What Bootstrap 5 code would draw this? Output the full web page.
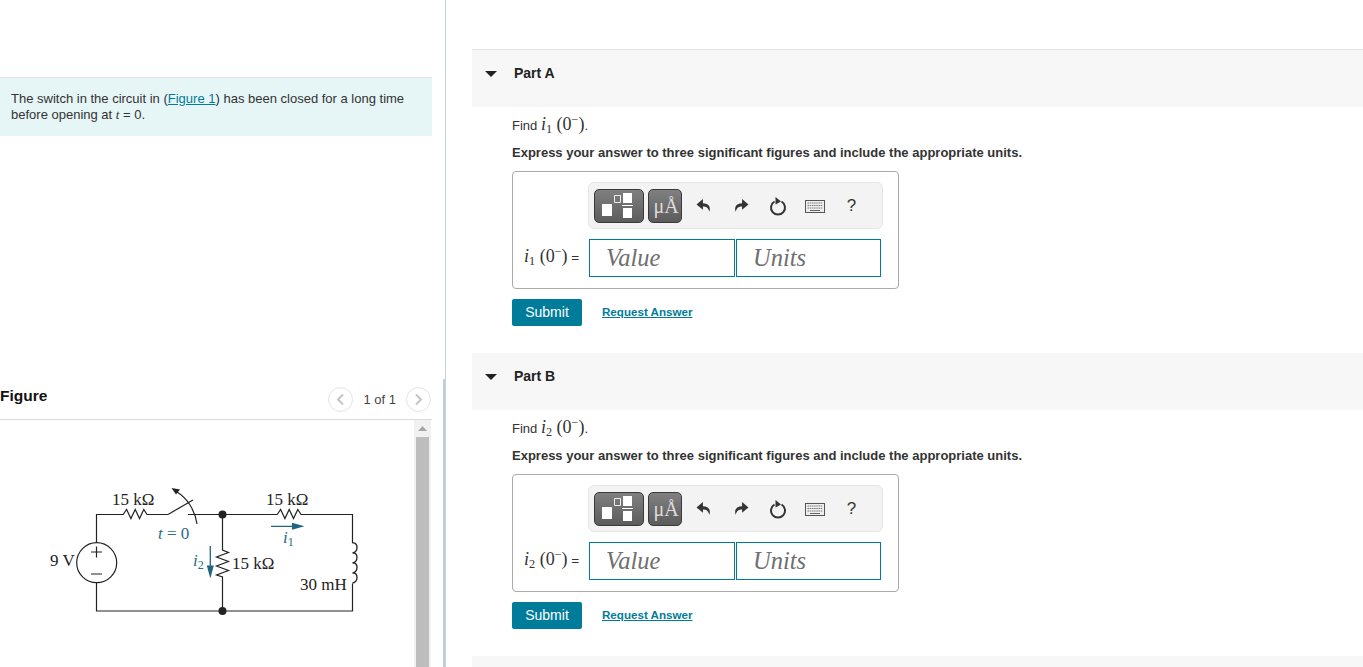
<!DOCTYPE html>
<html lang="en">
<head>
<meta charset="utf-8">
<title>Circuit problem</title>
<link href="https://cdn.jsdelivr.net/npm/bootstrap@5.3.0/dist/css/bootstrap.min.css" rel="stylesheet">
<style>
html,body{height:667px;overflow:hidden;background:#fff}
body{font-family:"Liberation Sans",Arial,sans-serif;font-size:12px;line-height:16px;color:#333}
.shell{height:667px}
.leftpane{width:446px;flex:none;border-right:1px solid #c9d2da;padding-top:77px}
.rightpane{flex:1;padding:49px 0 0 26px;min-width:0}
.intro{width:432px;height:59px;background:#e6f5f6;border-top:1px solid #dde3e6;padding:13px 11px 0;margin:0;font-size:13px}
.intro a{color:#007c9b}
.mi{font-family:"Liberation Serif",serif;font-style:italic}
.mr{font-family:"Liberation Serif",serif}
.mr sub,.mr sup,.mi sub{font-size:.68em;line-height:0;font-style:normal}
.figwrap{width:445px;height:288px;margin-top:243px;border-right:2px solid #b8cfe0;padding-right:11px}
.fighead{height:41px;border-bottom:1px solid #d9dcde;padding-right:1px}
.figtitle{font-size:15.5px;font-weight:700;color:#111;margin:0;line-height:20px;padding-top:7px}
.pager{font-size:13px;color:#444;gap:10px;padding-top:8px}
.pagecount{padding-top:5px}
.circbtn{width:25px;height:25px;border:1px solid #e4e4e4;border-radius:50%;background:#fff;padding:0;display:flex;align-items:center;justify-content:center}
.figscroll{height:247px}
.figcanvas{flex:1;min-width:0}
.circ{display:block}
.scrolltrack{width:17px;margin-right:1px;background:#f1f1f1;display:flex;flex-direction:column}
.scrollup{height:17px;display:flex;align-items:center;justify-content:center}
.scrollthumb{flex:1;margin:0 2px;background:#bdbdbd}
.partblock{height:303px}
.parthead{height:58px;background:#f7f7f7;border-top:1px solid #e3e3e3;padding:15px 0 0 13px;gap:17px}
.parthead.plainedge{border-top-color:#fff}
.parttitle{font-size:14px;font-weight:700;color:#222;line-height:16px;margin:0}
.caret{width:12px;height:6px;margin-top:6px;flex:none}
.partbody{padding:11px 0 0 40px}
.findline{font-size:13px;line-height:16px;margin:0 0 11px}
.findline .mr{font-size:18px;line-height:0}
.express{font-size:13px;font-weight:700;line-height:16px;margin:0 0 10px;color:#333}
.answerbox{width:387px;height:118px;border:1px solid #aaa;border-radius:4px;padding:10px 15px 0 0}
.toolbar{width:295px;height:47px;margin-left:75px;background:#f3f3f3;border:1px solid #e5e5e5;border-radius:6px;padding:6px 0 0 5px}
.tbtn{height:34px;padding:0;border:1px solid #3a3a3a;border-radius:5px;background:linear-gradient(#808080,#5c5c5c);display:flex;align-items:center;justify-content:center;color:#ddd}
.tw1{width:50px;margin-right:4px}
.tw2{width:34px;padding-left:2px;font-family:"Liberation Serif",serif;font-size:20px}
.ticons{margin-left:3px}
.ticon{width:37px;height:34px;display:flex;align-items:center;justify-content:center;color:#333;font-size:17px}
.answerrow{margin-top:10px;padding-left:11px}
.eqlabel{width:65px;flex:none;font-size:13.5px;white-space:nowrap}
.eqlabel .mr{font-size:18px;line-height:0}
.ansinput{width:146px;height:38px;border:1.5px solid #007c9b;border-radius:0;padding:0 0 0 16px;font-family:"Liberation Serif",serif;font-style:italic;font-size:24.5px;color:#333;background:#fff}
.ansinput::placeholder{color:#6f6f6f;opacity:1}
.ansinput+.ansinput{margin-left:1px;width:145px}
.actions{margin-top:10px;gap:20px}
.submitbtn{width:70px;height:27px;padding:0;background:#007c9b;border:0;border-radius:2px;color:#fff;font-size:14px;line-height:27px}
.reqlink{font-size:11.6px;font-weight:700;color:#007c9b;margin-top:-2px}
.nextpart{height:12px;margin-top:1px;background:#f7f7f7}
</style>
</head>
<body>
<div class="shell d-flex">
  <div class="leftpane">
    <p class="intro">The switch in the circuit in (<a href="#">Figure 1</a>) has been closed for a long time before opening at <span class="mi">t</span> = 0.</p>
    <div class="figwrap">
      <div class="fighead d-flex justify-content-between">
        <h2 class="figtitle">Figure</h2>
        <div class="pager d-flex">
          <button class="circbtn" aria-label="Previous"><svg width="9" height="13" viewBox="0 0 9 13"><path d="M7 1.500 2 6.500l5 5" fill="none" stroke="#c4c4c4" stroke-width="2"/></svg></button>
          <span class="pagecount">1 of 1</span>
          <button class="circbtn" aria-label="Next"><svg width="9" height="13" viewBox="0 0 9 13"><path d="M2 1.500l5 5-5 5" fill="none" stroke="#c4c4c4" stroke-width="2"/></svg></button>
        </div>
      </div>
      <div class="figscroll d-flex">
        <div class="figcanvas">
          <svg class="circ" width="414" height="247" viewBox="0 420 414 247">
            <g fill="none" stroke="#222" stroke-width="1.200">
              <path d="M168 514.500H147l-3.200-5-4.300 9-4.300-9-4.300 9-4.300-9-3.400 5H96.500V543M96.500 583V611H352.500V583.500M352.500 543V514.500H301l-3.200-5-4.300 9-4.300-9-4.300 9-4.300-9-3.400 5H188M222.500 514.500V550l6 2.500-12 4.500 12 4.500-12 4.500 12 4.500-12 4.500 6 2V611"/>
              <path d="M168 514.500 193 500"/>
              <circle cx="96.700" cy="562.700" r="20"/>
              <path d="M91 552h11M96.500 546.500v11M91 574h11"/>
              <path d="M352.500 543c6-1 6 9 0 10 6-1 6 9 0 10 6-1 6 9 0 10 6-1 6 9 0 10" stroke-width="1.300"/>
              <path d="M197 524c-2-14-10-26-20-32"/>
            </g>
            <path d="M171.500 488l8.500 1.500-4 5z" fill="#222"/>
            <circle cx="222.500" cy="514.500" r="4" fill="#222"/>
            <circle cx="222.500" cy="611" r="4" fill="#222"/>
            <g fill="none" stroke="#1f6480" stroke-width="1.300">
              <path d="M271 526.300h24M210.300 546v20"/>
            </g>
            <path d="M304.500 526.300 292 522.800v7z" fill="#1f6480"/>
            <path d="M210.300 578.500 206.800 565.500h7z" fill="#1f6480"/>
            <g font-family="Liberation Serif, serif" font-size="17" fill="#222">
              <text x="112" y="505">15 kΩ</text>
              <text x="266" y="505">15 kΩ</text>
              <text x="232" y="569">15 kΩ</text>
              <text x="300" y="590">30 mH</text>
              <text x="50" y="566">9 V</text>
            </g>
            <g font-family="Liberation Serif, serif" font-size="17" fill="#2a6a86">
              <text x="158" y="539"><tspan font-style="italic">t</tspan> = 0</text>
              <text x="283" y="543" font-style="italic">i<tspan font-size="12" font-style="normal" dy="3">1</tspan></text>
              <text x="193" y="566" font-style="italic">i<tspan font-size="12" font-style="normal" dy="3">2</tspan></text>
            </g>
          </svg>
        </div>
        <div class="scrolltrack">
          <div class="scrollup"><svg width="9" height="5" viewBox="0 0 9 5"><path d="M4.500 0 9 5H0z" fill="#a5a5a5"/></svg></div>
          <div class="scrollthumb"></div>
        </div>
      </div>
    </div>
  </div>

  <div class="rightpane">
    <section class="partblock">
      <div class="parthead d-flex">
        <svg class="caret" viewBox="0 0 12 6"><path d="M0 0h12L6 6z" fill="#222"/></svg>
        <h3 class="parttitle">Part A</h3>
      </div>
      <div class="partbody">
        <p class="findline">Find <span class="mr"><span class="mi">i</span><sub>1</sub> (0<sup>−</sup>)</span>.</p>
        <p class="express">Express your answer to three significant figures and include the appropriate units.</p>
        <div class="answerbox">
          <div class="toolbar d-flex">
            <button class="tbtn tw1" aria-label="Templates"><svg width="48" height="32" viewBox="0 0 48 32"><path d="M7 14h10v12H7zM28 3h9v10h-9zM28 18h9v10h-9z" fill="#fff"/><path d="M27 15.500h11" stroke="#fff"/><path d="M19.500 5.500h6v7h-6z" fill="none" stroke="#eee"/></svg></button>
            <button class="tbtn tw2">μÅ</button>
            <div class="ticons d-flex">
              <span class="ticon"><svg width="16" height="16" viewBox="0 0 15 15"><path d="M6.500 1 .5 6l6 5V8c3 0 5 1 6 5 1.500-4.500-.5-8-6-8z" fill="#333"/></svg></span>
              <span class="ticon"><svg width="16" height="16" viewBox="0 0 15 15"><path d="M8.500 1l6 5-6 5V8c-3 0-5 1-6 5C1 8.500 3 5 8.500 5z" fill="#333"/></svg></span>
              <span class="ticon"><svg width="18" height="20" viewBox="0 0 18 20"><path d="M5.500 5.500a7 7 0 1 0 7 0" fill="none" stroke="#333" stroke-width="2"/><path d="M6.500 1 12 5.500 6.500 8.500z" fill="#333"/></svg></span>
              <span class="ticon"><svg width="20" height="13" viewBox="0 0 20 13"><rect x=".5" y=".5" width="19" height="12" fill="#eee" stroke="#555"/><path d="M2.500 3h15M2.500 5.500h15M2.500 8h15" stroke="#777" stroke-dasharray="1.500 .7"/><path d="M5 10.500h10" stroke="#666"/></svg></span>
              <span class="ticon">?</span>
            </div>
          </div>
          <div class="answerrow d-flex">
            <span class="eqlabel align-self-center"><span class="mr"><span class="mi">i</span><sub>1</sub> (0<sup>−</sup>)</span> =</span>
            <input class="ansinput form-control" placeholder="Value" aria-label="Value">
            <input class="ansinput form-control" placeholder="Units" aria-label="Units">
          </div>
        </div>
        <div class="actions d-flex align-items-center">
          <button class="btn submitbtn">Submit</button>
          <a class="reqlink" href="#">Request Answer</a>
        </div>
      </div>
    </section>

    <section class="partblock">
      <div class="parthead plainedge d-flex">
        <svg class="caret" viewBox="0 0 12 6"><path d="M0 0h12L6 6z" fill="#222"/></svg>
        <h3 class="parttitle">Part B</h3>
      </div>
      <div class="partbody">
        <p class="findline">Find <span class="mr"><span class="mi">i</span><sub>2</sub> (0<sup>−</sup>)</span>.</p>
        <p class="express">Express your answer to three significant figures and include the appropriate units.</p>
        <div class="answerbox">
          <div class="toolbar d-flex">
            <button class="tbtn tw1" aria-label="Templates"><svg width="48" height="32" viewBox="0 0 48 32"><path d="M7 14h10v12H7zM28 3h9v10h-9zM28 18h9v10h-9z" fill="#fff"/><path d="M27 15.500h11" stroke="#fff"/><path d="M19.500 5.500h6v7h-6z" fill="none" stroke="#eee"/></svg></button>
            <button class="tbtn tw2">μÅ</button>
            <div class="ticons d-flex">
              <span class="ticon"><svg width="16" height="16" viewBox="0 0 15 15"><path d="M6.500 1 .5 6l6 5V8c3 0 5 1 6 5 1.500-4.500-.5-8-6-8z" fill="#333"/></svg></span>
              <span class="ticon"><svg width="16" height="16" viewBox="0 0 15 15"><path d="M8.500 1l6 5-6 5V8c-3 0-5 1-6 5C1 8.500 3 5 8.500 5z" fill="#333"/></svg></span>
              <span class="ticon"><svg width="18" height="20" viewBox="0 0 18 20"><path d="M5.500 5.500a7 7 0 1 0 7 0" fill="none" stroke="#333" stroke-width="2"/><path d="M6.500 1 12 5.500 6.500 8.500z" fill="#333"/></svg></span>
              <span class="ticon"><svg width="20" height="13" viewBox="0 0 20 13"><rect x=".5" y=".5" width="19" height="12" fill="#eee" stroke="#555"/><path d="M2.500 3h15M2.500 5.500h15M2.500 8h15" stroke="#777" stroke-dasharray="1.500 .7"/><path d="M5 10.500h10" stroke="#666"/></svg></span>
              <span class="ticon">?</span>
            </div>
          </div>
          <div class="answerrow d-flex">
            <span class="eqlabel align-self-center"><span class="mr"><span class="mi">i</span><sub>2</sub> (0<sup>−</sup>)</span> =</span>
            <input class="ansinput form-control" placeholder="Value" aria-label="Value">
            <input class="ansinput form-control" placeholder="Units" aria-label="Units">
          </div>
        </div>
        <div class="actions d-flex align-items-center">
          <button class="btn submitbtn">Submit</button>
          <a class="reqlink" href="#">Request Answer</a>
        </div>
      </div>
    </section>
    <div class="nextpart"></div>
  </div>
</div>
<script src="https://cdn.jsdelivr.net/npm/bootstrap@5.3.0/dist/js/bootstrap.bundle.min.js"></script>
</body>
</html>
